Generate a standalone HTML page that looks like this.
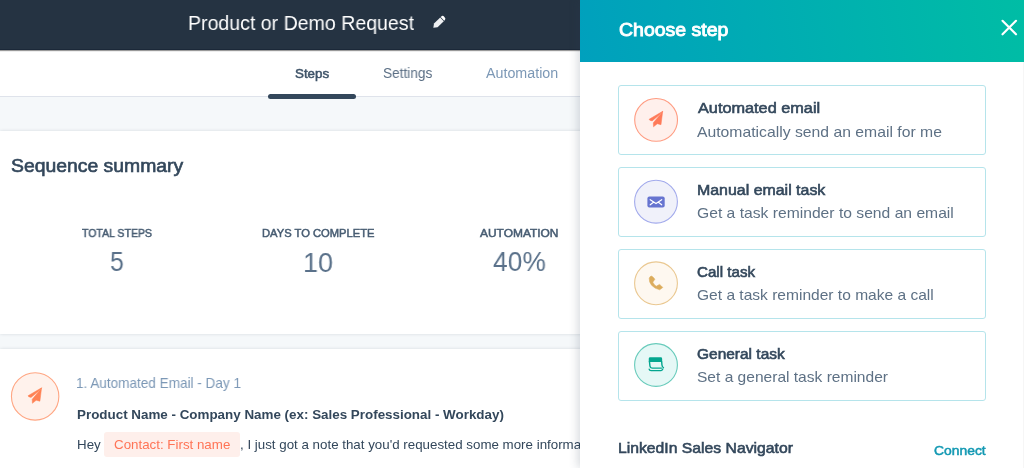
<!DOCTYPE html>
<html><head><meta charset="utf-8">
<style>
*{margin:0;padding:0;box-sizing:border-box}
html,body{width:1024px;height:468px;overflow:hidden;background:#fff;font-family:"Liberation Sans",sans-serif}
.a{position:absolute;white-space:nowrap;line-height:1;transform-origin:0 0;will-change:transform}
#hdr{position:absolute;z-index:5;left:0;top:0;width:1024px;height:50px;background:#253342;border-bottom:1px solid #1b2838;box-shadow:0 1px 1px rgba(0,0,0,.4)}
#tabs{position:absolute;left:0;top:50px;width:1024px;height:47px;background:#fff;border-bottom:1px solid #dfe3eb}
#gray{position:absolute;left:0;top:97px;width:1024px;height:371px;background:#f5f8fa}
.card{position:absolute;left:0;background:#fff;box-shadow:0 0 3px rgba(45,62,80,.16)}
#panel{position:absolute;z-index:10;left:580px;top:0;width:444px;height:468px;background:#fff;box-shadow:-2px 0 9px rgba(45,62,80,.2)}
#phdr{position:absolute;left:580px;top:0;width:444px;height:62px;z-index:11;background:linear-gradient(80deg,#00a0bd 0%,#00bda5 100%)}
.opt{position:absolute;z-index:11;left:618px;width:368px;height:70px;border:1px solid #b5e4eb;border-radius:3px;background:#fff}
.p{z-index:12}
.e{position:absolute;white-space:nowrap;font-size:13.33px;line-height:16px;will-change:transform}
</style></head><body>
<div id="gray"></div>
<div class="card" style="top:131px;width:1024px;height:203px"></div>
<div class="card" style="top:349px;width:1024px;height:119px"></div>
<div id="tabs"></div>
<div style="position:absolute;z-index:3;left:268px;top:94px;width:88px;height:5px;border-radius:3px;background:#33475b"></div>
<div id="hdr"></div>
<div class="a" style="left:187.99px;top:12.52px;font-size:20.65px;color:#ffffff;transform:scaleX(0.9472);z-index:6;">Product or Demo Request</div>
<div class="a" style="left:295.25px;top:67.62px;font-size:12.64px;color:#3e5368;-webkit-text-stroke:0.5px #3e5368;transform:scaleX(1.0568);">Steps</div>
<div class="a" style="left:383.14px;top:66.75px;font-size:13.95px;color:#5a6e84;transform:scaleX(0.9771);">Settings</div>
<div class="a" style="left:486.06px;top:67.09px;font-size:13.95px;color:#7c98b6;transform:scaleX(1.0243);">Automation</div>
<div class="a" style="left:10.93px;top:157.93px;font-size:17.95px;color:#33475b;-webkit-text-stroke:0.6px #33475b;transform:scaleX(1.0795);">Sequence summary</div>
<div class="a" style="left:82.21px;top:228.13px;font-size:11.01px;color:#475c72;-webkit-text-stroke:0.5px #475c72;transform:scaleX(0.9569);">TOTAL STEPS</div>
<div class="a" style="left:261.73px;top:228.33px;font-size:11.01px;color:#475c72;-webkit-text-stroke:0.5px #475c72;transform:scaleX(1.0170);">DAYS TO COMPLETE</div>
<div class="a" style="left:480.42px;top:228.33px;font-size:11.01px;color:#475c72;-webkit-text-stroke:0.5px #475c72;transform:scaleX(1.0850);">AUTOMATION</div>
<div class="a" style="left:109.81px;top:246.82px;font-size:28.23px;color:#5a718a;transform:scaleX(0.8800);">5</div>
<div class="a" style="left:303.48px;top:247.60px;font-size:28.23px;color:#5a718a;transform:scaleX(0.9553);">10</div>
<div class="a" style="left:493.21px;top:247.40px;font-size:28.23px;color:#5a718a;transform:scaleX(0.9337);">40%</div>
<div class="a" style="left:76.18px;top:375.91px;font-size:14.40px;color:#7c98b6;transform:scaleX(0.9417);">1. Automated Email - Day 1</div>
<div class="e" style="left:77px;top:407px;font-size:13.4px;font-weight:bold;color:#33475b">Product Name - Company Name (ex: Sales Professional - Workday)</div>
<div class="e" style="left:77px;top:437px;color:#33475b">Hey</div>
<div style="position:absolute;left:104px;top:432px;width:136px;height:25px;border-radius:3px;background:#feefeb"></div>
<div class="e" style="left:113.6px;top:437px;color:#ff7456">Contact: First name</div>
<div class="e" style="left:240px;top:437px;color:#33475b">, I just got a note that you'd requested some more information</div>
<div id="panel"></div>
<div id="phdr"></div>
<div class="opt" style="top:85px"></div>
<div class="opt" style="top:167px"></div>
<div class="opt" style="top:249px"></div>
<div class="opt" style="top:331px"></div>
<div class="a" style="left:618.77px;top:21.11px;font-size:18.37px;color:#ffffff;-webkit-text-stroke:0.9px #ffffff;transform:scaleX(1.0619);z-index:12;">Choose step</div>
<div class="a" style="left:697.76px;top:100.45px;font-size:15.06px;color:#34485c;-webkit-text-stroke:0.6px #34485c;transform:scaleX(1.0818);z-index:12;">Automated email</div>
<div class="a" style="left:697.46px;top:123.54px;font-size:15.55px;color:#5e7185;transform:scaleX(1.0122);z-index:12;">Automatically send an email for me</div>
<div class="a" style="left:696.69px;top:182.45px;font-size:15.06px;color:#34485c;-webkit-text-stroke:0.6px #34485c;transform:scaleX(1.0581);z-index:12;">Manual email task</div>
<div class="a" style="left:696.92px;top:205.38px;font-size:15.55px;color:#5e7185;transform:scaleX(1.0075);z-index:12;">Get a task reminder to send an email</div>
<div class="a" style="left:697.24px;top:264.30px;font-size:15.06px;color:#34485c;-webkit-text-stroke:0.6px #34485c;transform:scaleX(1.0054);z-index:12;">Call task</div>
<div class="a" style="left:696.92px;top:287.38px;font-size:15.55px;color:#5e7185;z-index:12;">Get a task reminder to make a call</div>
<div class="a" style="left:697.23px;top:346.30px;font-size:15.06px;color:#34485c;-webkit-text-stroke:0.6px #34485c;transform:scaleX(1.0281);z-index:12;">General task</div>
<div class="a" style="left:697.00px;top:369.38px;font-size:15.55px;color:#5e7185;z-index:12;">Set a general task reminder</div>
<div class="a" style="left:618.40px;top:439.93px;font-size:15.56px;color:#33475b;-webkit-text-stroke:0.6px #33475b;transform:scaleX(1.0122);z-index:12;">LinkedIn Sales Navigator</div>
<div class="a" style="left:933.86px;top:444.31px;font-size:13.00px;color:#1499b3;-webkit-text-stroke:0.5px #1499b3;transform:scaleX(1.0673);z-index:12;">Connect</div>
<div style="position:absolute;z-index:15;left:1023px;top:62px;width:1px;height:406px;background:#f6f6f6"></div>
<svg style="position:absolute;left:0;top:0;z-index:20;pointer-events:none" width="1024" height="468" viewBox="0 0 1024 468">
 <!-- pencil -->
 <svg x="430" y="12" width="20" height="20" viewBox="0 0 468 468">
  <g transform="translate(78,367) rotate(-44)">
   <path d="M0 0 L80 -60 L282 -60 L282 60 L80 60 Z" fill="#eef0f2"/>
   <path d="M296 -60 L318 -60 A 44 60 0 0 1 318 60 L296 60 Z" fill="#fff"/>
  </g>
 </svg>
 <!-- close X -->
 <path d="M1002.5 20.8 L1016 34.3 M1016 20.8 L1002.5 34.3" stroke="#fff" stroke-width="2.2" stroke-linecap="round"/>
 <!-- circles -->
 <circle cx="656.1" cy="119.9" r="21.4" fill="#fff0ec" stroke="#ff9c82" stroke-width="1.1"/>
 <circle cx="656" cy="201.7" r="21.4" fill="#f0f1fa" stroke="#a2aaec" stroke-width="1.1"/>
 <circle cx="656" cy="283.3" r="21.4" fill="#fef8f0" stroke="#eac891" stroke-width="1.1"/>
 <circle cx="656" cy="365" r="21.4" fill="#e5f8f6" stroke="#68cbbb" stroke-width="1.1"/>
 <circle cx="35.15" cy="396.4" r="23.7" fill="#fff2ec" stroke="#ffa683" stroke-width="1.1"/>
 <!-- plane 1 -->
 <path d="M662.7 111.3 L649.1 119.3 L649.8 120.2 L652.1 120.9 L659.6 114.8 Z" fill="#ff7a59" stroke="#ff7a59" stroke-width=".5" stroke-linejoin="round"/>
 <path d="M662.7 111.3 L660.3 114.4 L653.3 122.8 L653.5 126.8 L657.3 123.75 L661 124.7 Z" fill="#ff7a59" stroke="#ff7a59" stroke-width=".5" stroke-linejoin="round"/>
 <!-- envelope -->
 <rect x="647.4" y="196.5" width="17.3" height="11.1" rx="2" fill="#6674d0"/>
 <path d="M650.2 199.7 L656 203.5 L661.7 199.7 M650.2 204.8 L653.5 202.2 M661.7 204.8 L658.4 202.2" stroke="#fff" stroke-width="1.2" fill="none" stroke-linecap="round"/>
 <!-- phone -->
 <svg x="647" y="274" width="18" height="18" viewBox="0 0 468 468">
  <path d="M115 55 Q150 62 205 135 L150 212 Q185 280 240 318 L325 270 Q372 302 410 350 L330 410 Q210 392 118 292 Q48 200 58 110 Q72 60 115 55 Z" fill="#dcac5c" stroke="#dcac5c" stroke-width="14" stroke-linejoin="round"/>
 </svg>
 <!-- general task -->
 <svg x="645" y="354" width="22" height="22" viewBox="0 0 468 468">
  <path d="M80 170 L80 100 Q80 70 110 70 L335 70 Q365 70 365 100 L365 170 Z" fill="#04a68f"/>
  <path d="M95 165 L105 255 Q112 300 160 300 L350 300" stroke="#04a68f" stroke-width="30" fill="none" stroke-linecap="round"/>
  <path d="M355 165 L360 230 Q368 285 392 290" stroke="#04a68f" stroke-width="30" fill="none" stroke-linecap="round"/>
  <path d="M88 322 Q92 355 130 355 L340 355 Q372 350 380 318" stroke="#04a68f" stroke-width="28" fill="none" stroke-linecap="round"/>
 </svg>
 <!-- plane 2 (step) -->
 <svg x="24.9" y="384.5" width="20" height="22" viewBox="646 108 20 22">
  <path d="M662.7 111.3 L649.1 119.3 L649.8 120.2 L652.1 120.9 L659.6 114.8 Z" fill="#ff8255" stroke="#ff8255" stroke-width=".5" stroke-linejoin="round"/>
  <path d="M662.7 111.3 L660.3 114.4 L653.3 122.8 L653.5 126.8 L657.3 123.75 L661 124.7 Z" fill="#ff8255" stroke="#ff8255" stroke-width=".5" stroke-linejoin="round"/>
 </svg>
</svg>
</body></html>
